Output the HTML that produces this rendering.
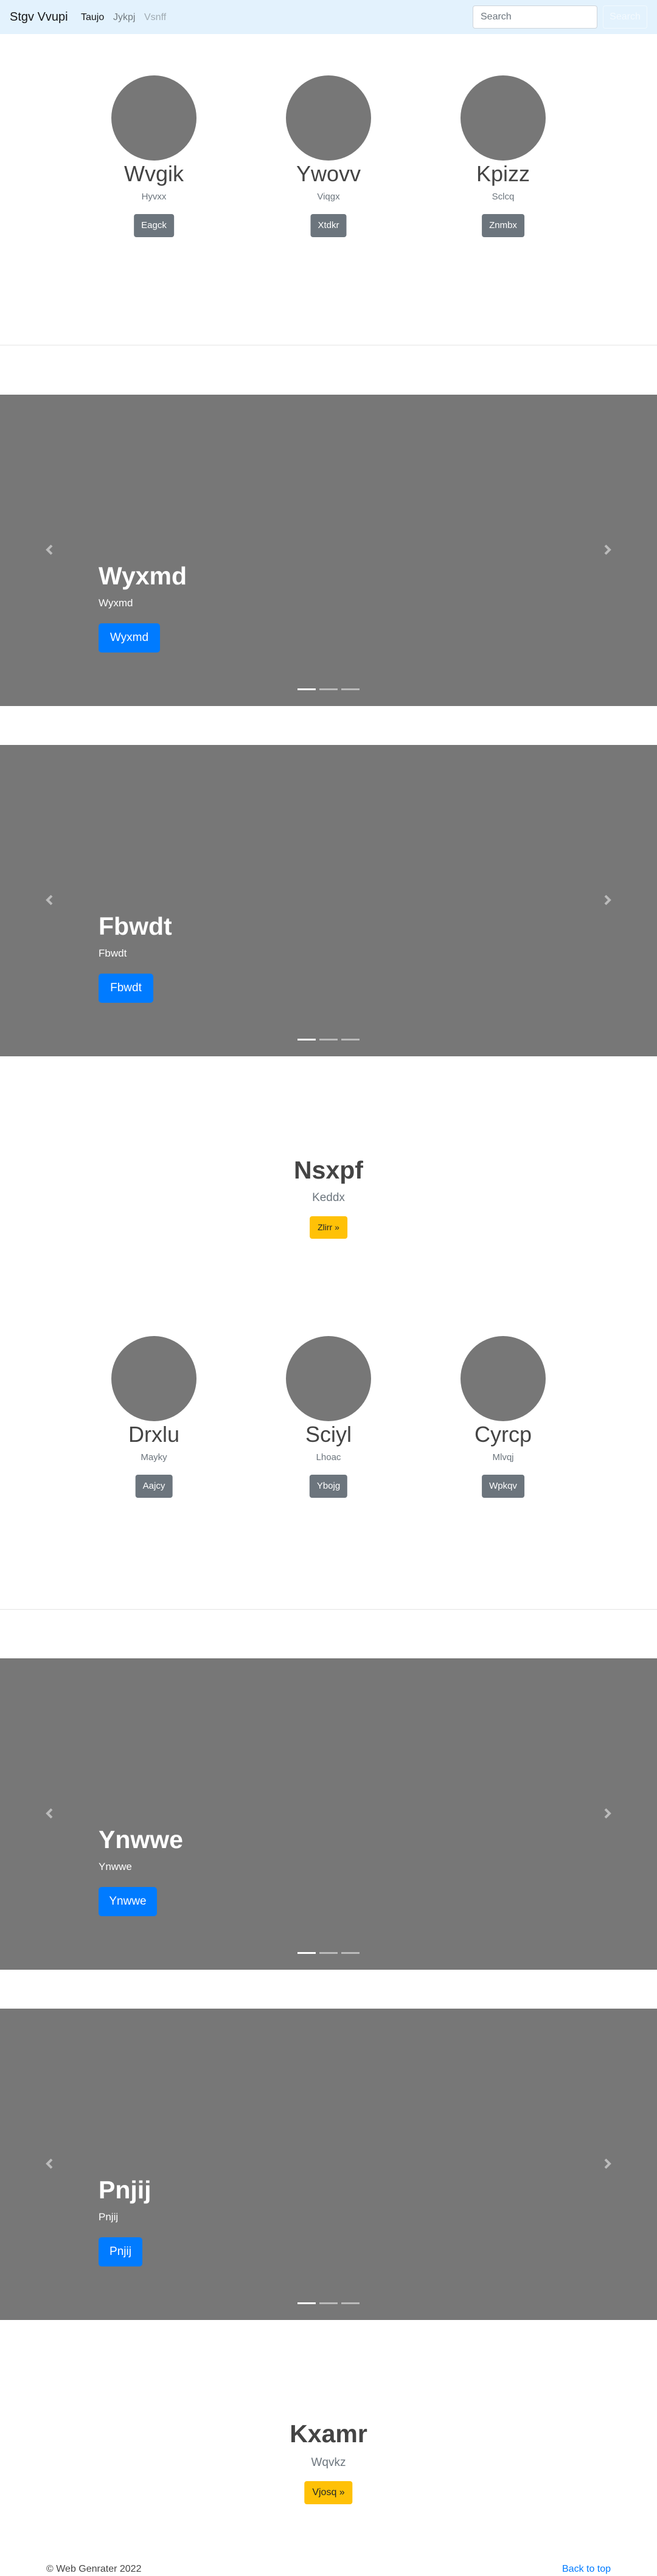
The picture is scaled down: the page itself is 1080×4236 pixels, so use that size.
<!DOCTYPE html>
<html><head><meta charset="utf-8">
<style>
*{box-sizing:border-box;margin:0;padding:0}
body{width:1080px;height:4235px;position:relative;background:#fff;font-family:"Liberation Sans",sans-serif;overflow:hidden;color:#212529}
.a{position:absolute}
.nav{left:0;top:0;width:1080px;height:56px;background:#e3f2fd}
.circ{width:140px;height:140px;border-radius:50%;background:#777}
.c{text-align:center;transform:translateX(-50%)}
.name{font-size:36px;color:#444;line-height:44px;white-space:nowrap}
.sub{font-size:15px;color:#6c757d;line-height:20px;white-space:nowrap}
.btns{background:#6c757d;color:#fff;font-size:15px;height:38px;line-height:38px;padding:0 12px;border-radius:4px;white-space:nowrap}
.car{left:0;width:1080px;height:512px;background:#777}
.ct{color:#fff;font-size:41px;font-weight:bold;line-height:48px;left:162px}
.cs{color:#fff;font-size:17px;left:162px;line-height:22px}
.cb{left:162px;width:101px;height:48px;background:#007bff;color:#fff;font-size:19px;line-height:48px;text-align:center;border-radius:5px}
.ind{width:30px;height:3px;background:rgba(255,255,255,.5)}
.arr{top:246px;width:12px;height:18px}
.ht{font-size:41px;color:#444;font-weight:bold;line-height:50px;white-space:nowrap}
.hs{font-size:19px;color:#6c757d;line-height:24px;white-space:nowrap}
.hb{background:#ffc107;color:#212529;font-size:14px;height:37px;line-height:37px;padding:0 13px;border-radius:4px;white-space:nowrap}
hr{position:absolute;left:0;width:1080px;border:0;border-top:1px solid #e5e5e5}
</style></head><body>
<div class="a nav">
 <div class="a" style="left:16px;top:14px;font-size:20px;line-height:28px;color:rgba(0,0,0,.9)">Stgv Vvupi</div>
 <div class="a" style="left:133px;top:18px;font-size:16px;line-height:22px;color:rgba(0,0,0,.9)">Taujo</div>
 <div class="a" style="left:186px;top:18px;font-size:16px;line-height:22px;color:rgba(0,0,0,.5)">Jykpj</div>
 <div class="a" style="left:237px;top:18px;font-size:16px;line-height:22px;color:rgba(0,0,0,.3)">Vsnff</div>
 <div class="a" style="left:777px;top:9px;width:205px;height:38px;background:#fff;border:1px solid #ced4da;border-radius:4px;font-size:16px;line-height:36px;padding-left:12px;color:#6c757d">Search</div>
 <div class="a" style="left:991px;top:9px;width:73px;height:38px;border:1px solid rgba(255,255,255,.5);border-radius:4px;font-size:16px;line-height:36px;text-align:center;color:rgba(255,255,255,.6)">Search</div>
</div>

<div class="a circ" style="left:183px;top:124px"></div>
<div class="a circ" style="left:470px;top:124px"></div>
<div class="a circ" style="left:757px;top:124px"></div>
<div class="a c name" style="left:253px;top:264px">Wvgik</div>
<div class="a c name" style="left:540px;top:264px">Ywovv</div>
<div class="a c name" style="left:827px;top:264px">Kpizz</div>
<div class="a c sub" style="left:253px;top:314px">Hyvxx</div>
<div class="a c sub" style="left:540px;top:314px">Viqgx</div>
<div class="a c sub" style="left:827px;top:314px">Sclcq</div>
<div class="a c btns" style="left:253px;top:352px">Eagck</div>
<div class="a c btns" style="left:540px;top:352px">Xtdkr</div>
<div class="a c btns" style="left:827px;top:352px">Znmbx</div>
<hr style="top:567px">

<div class="a car" style="top:649px">
 <svg class="a arr" style="left:75px" viewBox="0 0 12 18"><path d="M10 2L3 9l7 7" fill="none" stroke="#bbb" stroke-width="4"/></svg>
 <svg class="a arr" style="left:993px" viewBox="0 0 12 18"><path d="M2 2l7 7-7 7" fill="none" stroke="#bbb" stroke-width="4"/></svg>
 <div class="a ct" style="top:274px">Wyxmd</div>
 <div class="a cs" style="top:332px">Wyxmd</div>
 <div class="a cb" style="top:376px">Wyxmd</div>
 <div class="a ind" style="left:489px;top:483px;background:#fff"></div>
 <div class="a ind" style="left:525px;top:483px"></div>
 <div class="a ind" style="left:561px;top:483px"></div>
</div>
<div class="a car" style="top:1225px">
 <svg class="a arr" style="left:75px" viewBox="0 0 12 18"><path d="M10 2L3 9l7 7" fill="none" stroke="#bbb" stroke-width="4"/></svg>
 <svg class="a arr" style="left:993px" viewBox="0 0 12 18"><path d="M2 2l7 7-7 7" fill="none" stroke="#bbb" stroke-width="4"/></svg>
 <div class="a ct" style="top:274px">Fbwdt</div>
 <div class="a cs" style="top:332px">Fbwdt</div>
 <div class="a cb" style="top:376px;width:90px">Fbwdt</div>
 <div class="a ind" style="left:489px;top:483px;background:#fff"></div>
 <div class="a ind" style="left:525px;top:483px"></div>
 <div class="a ind" style="left:561px;top:483px"></div>
</div>
<div class="a c ht" style="left:540px;top:1899px">Nsxpf</div>
<div class="a c hs" style="left:540px;top:1958px">Keddx</div>
<div class="a c hb" style="left:540px;top:2000px">Zlirr »</div>

<div class="a circ" style="left:183px;top:2197px"></div>
<div class="a circ" style="left:470px;top:2197px"></div>
<div class="a circ" style="left:757px;top:2197px"></div>
<div class="a c name" style="left:253px;top:2337px">Drxlu</div>
<div class="a c name" style="left:540px;top:2337px">Sciyl</div>
<div class="a c name" style="left:827px;top:2337px">Cyrcp</div>
<div class="a c sub" style="left:253px;top:2387px">Mayky</div>
<div class="a c sub" style="left:540px;top:2387px">Lhoac</div>
<div class="a c sub" style="left:827px;top:2387px">Mlvqj</div>
<div class="a c btns" style="left:253px;top:2425px">Aajcy</div>
<div class="a c btns" style="left:540px;top:2425px">Ybojg</div>
<div class="a c btns" style="left:827px;top:2425px">Wpkqv</div>
<hr style="top:2646px">

<div class="a car" style="top:2727px">
 <svg class="a arr" style="left:75px" viewBox="0 0 12 18"><path d="M10 2L3 9l7 7" fill="none" stroke="#bbb" stroke-width="4"/></svg>
 <svg class="a arr" style="left:993px" viewBox="0 0 12 18"><path d="M2 2l7 7-7 7" fill="none" stroke="#bbb" stroke-width="4"/></svg>
 <div class="a ct" style="top:274px">Ynwwe</div>
 <div class="a cs" style="top:332px">Ynwwe</div>
 <div class="a cb" style="top:376px;width:96px">Ynwwe</div>
 <div class="a ind" style="left:489px;top:483px;background:#fff"></div>
 <div class="a ind" style="left:525px;top:483px"></div>
 <div class="a ind" style="left:561px;top:483px"></div>
</div>
<div class="a car" style="top:3303px">
 <svg class="a arr" style="left:75px" viewBox="0 0 12 18"><path d="M10 2L3 9l7 7" fill="none" stroke="#bbb" stroke-width="4"/></svg>
 <svg class="a arr" style="left:993px" viewBox="0 0 12 18"><path d="M2 2l7 7-7 7" fill="none" stroke="#bbb" stroke-width="4"/></svg>
 <div class="a ct" style="top:274px">Pnjij</div>
 <div class="a cs" style="top:332px">Pnjij</div>
 <div class="a cb" style="top:376px;width:72px">Pnjij</div>
 <div class="a ind" style="left:489px;top:483px;background:#fff"></div>
 <div class="a ind" style="left:525px;top:483px"></div>
 <div class="a ind" style="left:561px;top:483px"></div>
</div>
<div class="a c ht" style="left:540px;top:3977px">Kxamr</div>
<div class="a c hs" style="left:540px;top:4038px">Wqvkz</div>
<div class="a c hb" style="left:540px;top:4080px;height:38px;line-height:38px;font-size:16px">Vjosq »</div>

<div class="a" style="left:76px;top:4214px;font-size:16px;line-height:22px;color:#444">© Web Genrater 2022</div>
<div class="a" style="left:924px;top:4214px;font-size:16px;line-height:22px;color:#007bff">Back to top</div>
</body></html>
